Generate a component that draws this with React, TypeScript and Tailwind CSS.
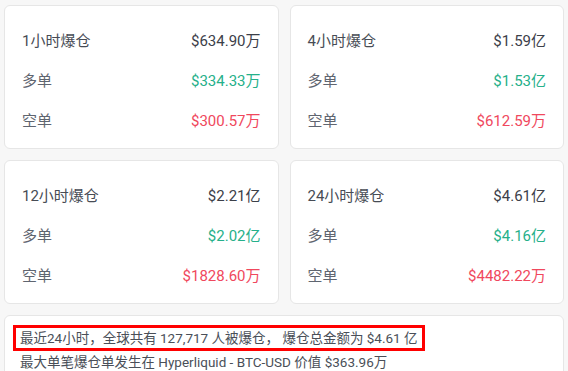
const font = { fontFamily: '"Roboto", "Noto Sans CJK SC", sans-serif' };

type Row = { label: string; value: string; tone: 'main' | 'up' | 'down' };

const cards: { title: string; rows: Row[] }[] = [
  {
    title: '1小时爆仓',
    rows: [
      { label: '1小时爆仓', value: '$634.90万', tone: 'main' },
      { label: '多单', value: '$334.33万', tone: 'up' },
      { label: '空单', value: '$300.57万', tone: 'down' },
    ],
  },
  {
    title: '4小时爆仓',
    rows: [
      { label: '4小时爆仓', value: '$1.59亿', tone: 'main' },
      { label: '多单', value: '$1.53亿', tone: 'up' },
      { label: '空单', value: '$612.59万', tone: 'down' },
    ],
  },
  {
    title: '12小时爆仓',
    rows: [
      { label: '12小时爆仓', value: '$2.21亿', tone: 'main' },
      { label: '多单', value: '$2.02亿', tone: 'up' },
      { label: '空单', value: '$1828.60万', tone: 'down' },
    ],
  },
  {
    title: '24小时爆仓',
    rows: [
      { label: '24小时爆仓', value: '$4.61亿', tone: 'main' },
      { label: '多单', value: '$4.16亿', tone: 'up' },
      { label: '空单', value: '$4482.22万', tone: 'down' },
    ],
  },
];

const toneClass = {
  main: 'text-[#3c4049]',
  up: 'text-[#26b08a]',
  down: 'text-[#f0485d]',
};

function StatCard({ rows }: { rows: Row[] }) {
  return (
    <div className="h-[144px] rounded-md border border-[#e6e6e6] bg-white px-[17px] pt-[15px]">
      {rows.map((r, i) => (
        <div key={r.label} className="flex h-[40px] items-center justify-between text-[15px]">
          <span className={i === 0 ? 'text-[#474c55]' : 'text-[#5f6570]'}>{r.label}</span>
          <span className={toneClass[r.tone]}>{r.value}</span>
        </div>
      ))}
    </div>
  );
}

export default function App() {
  return (
    <div className="h-[371px] w-[568px] overflow-hidden bg-[#f7f7f7] px-[4px] pt-[5px]" style={font}>
      <div className="grid grid-cols-2 gap-[11px]">
        {cards.map((c) => (
          <StatCard key={c.title} rows={c.rows} />
        ))}
      </div>
      <div className="relative mt-[11px] h-[80px] rounded-md border border-[#e6e6e6] bg-white px-[15px] pt-[10px] text-[13.5px] leading-[24px] text-[#4a4f58]">
        <p>最近24小时，全球共有 127,717 人被爆仓， 爆仓总金额为 $4.61 亿</p>
        <p>最大单笔爆仓单发生在 Hyperliquid - BTC-USD 价值 $363.96万</p>
        <div className="absolute left-[8px] top-[9px] h-[26px] w-[412px] border-[3px] border-[#ff0000]" />
      </div>
    </div>
  );
}
